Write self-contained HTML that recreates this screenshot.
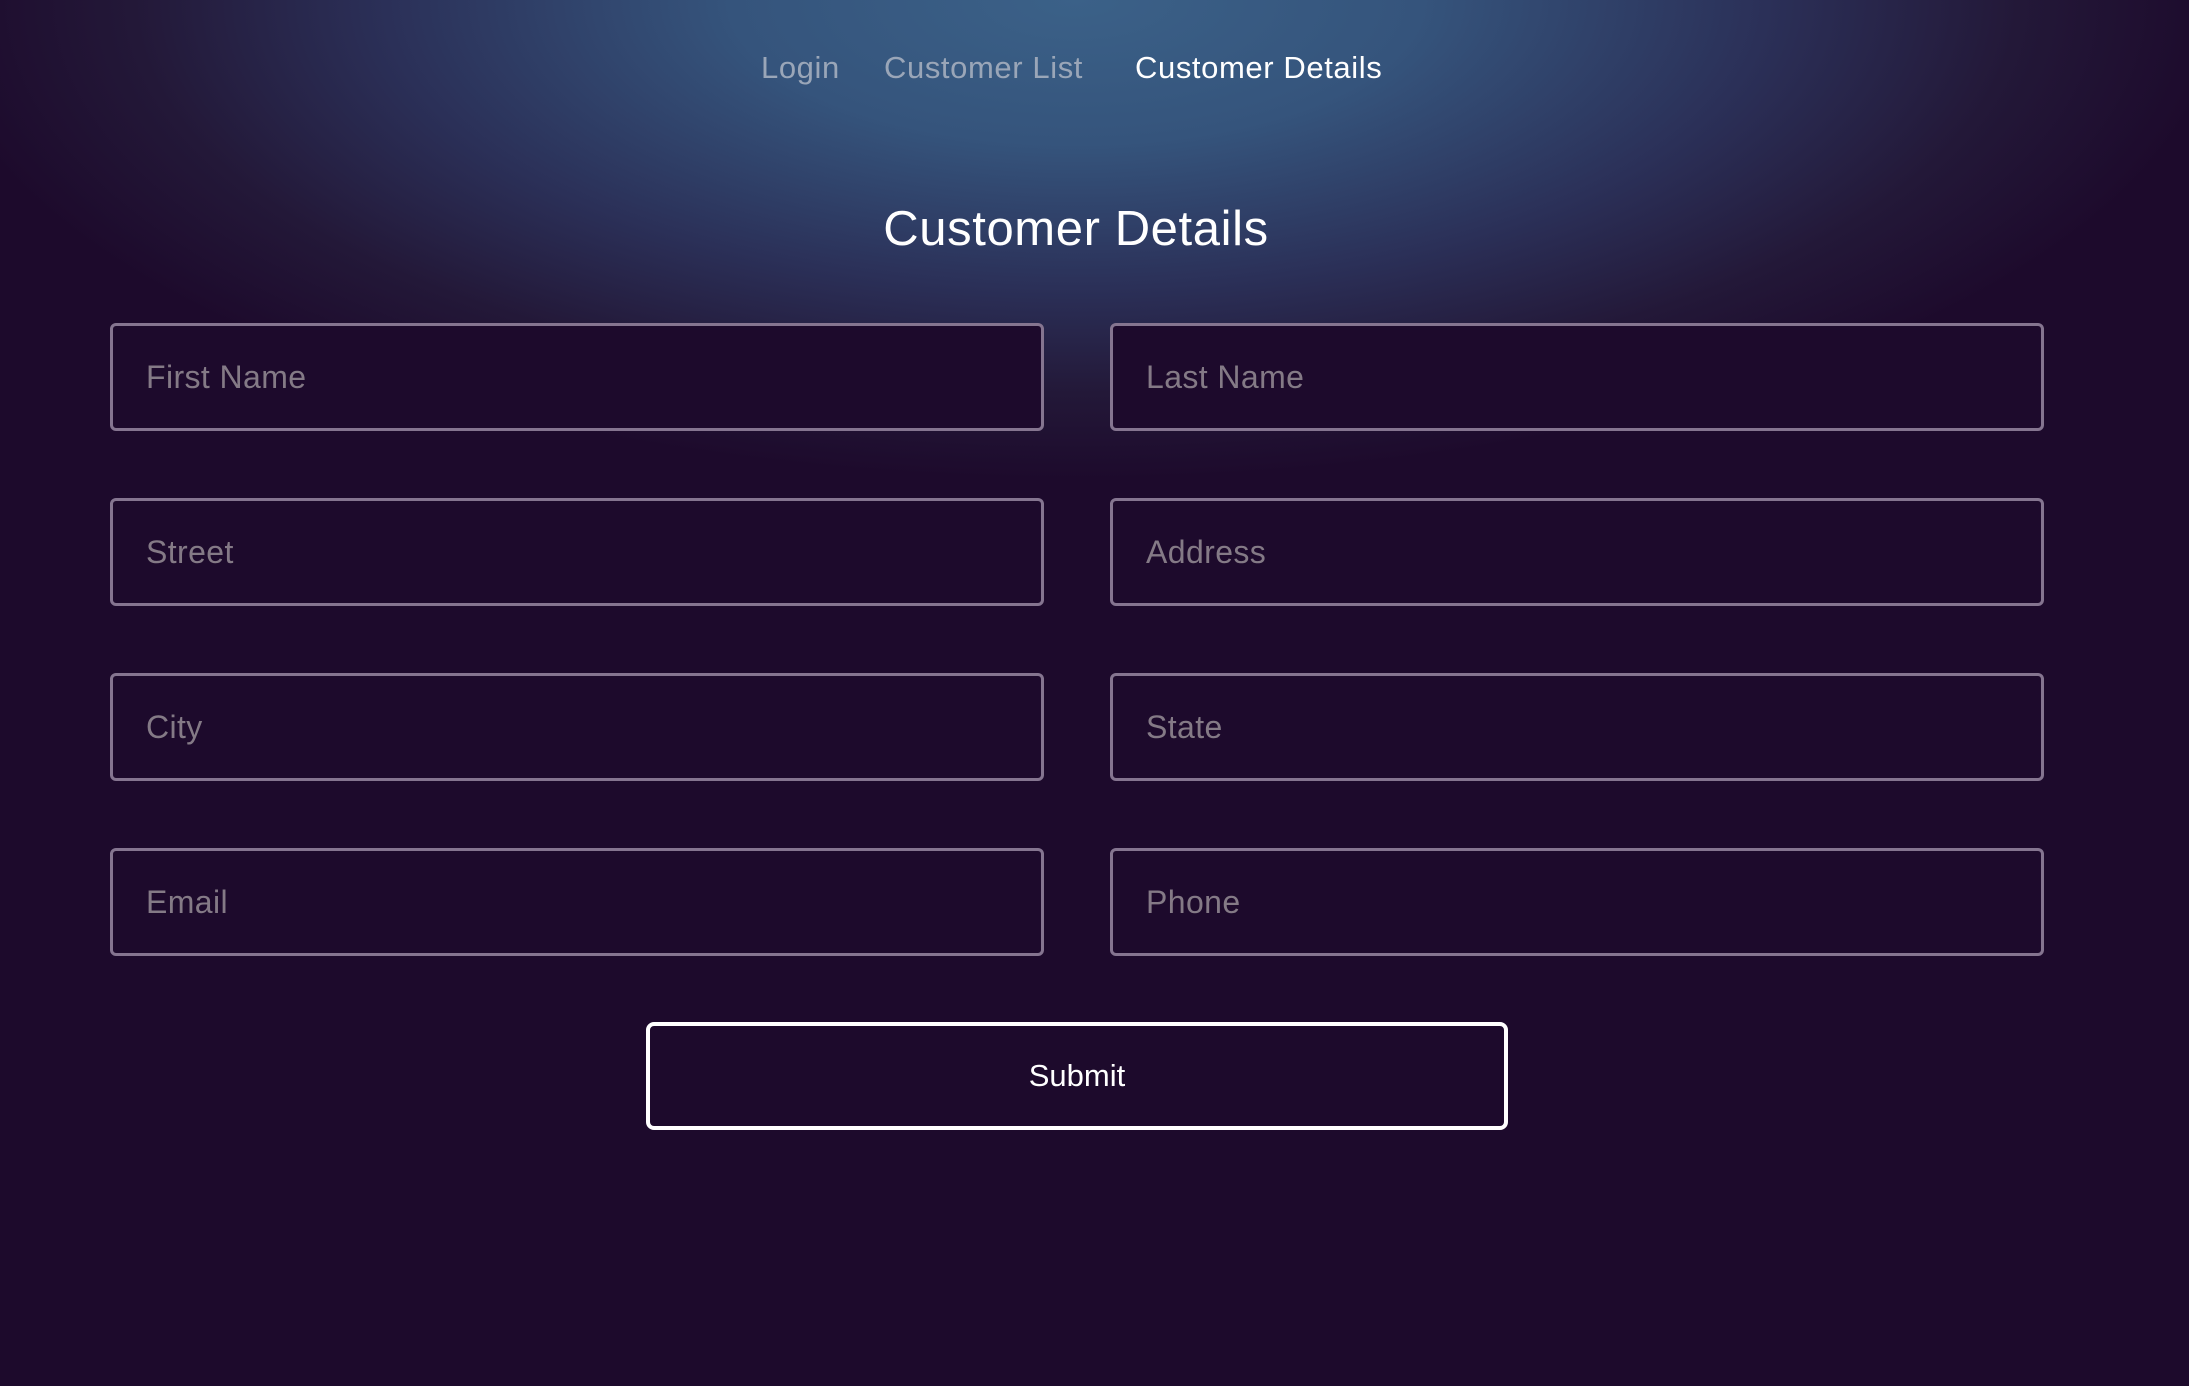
<!DOCTYPE html>
<html><head><meta charset="utf-8"><style>
html,body{margin:0;padding:0;}
body{width:2189px;height:1386px;overflow:hidden;position:relative;background:#1d0a2c;font-family:"Liberation Sans",sans-serif;}
.glow{position:absolute;left:0;top:0;width:2189px;height:1386px;background:radial-gradient(ellipse 1150px 480px at 1076px 0px,#3b6188 0%,#35547c 30%,#2b3058 60%,#231838 82%,rgba(29,10,44,0) 100%);}
.nav{position:absolute;top:50px;font-size:31px;color:#9aa6b8;letter-spacing:0.6px;}
h1{position:absolute;left:0;width:2152px;text-align:center;top:201px;margin:0;font-weight:normal;font-size:49px;color:#fff;letter-spacing:0.6px;}
.in{position:absolute;border:3px solid #857590;border-radius:6px;background:#1d0a2c;color:#847a86;font-size:32px;letter-spacing:0.4px;line-height:102px;padding-left:33px;box-sizing:border-box;height:108px;width:934px;}
.btn{position:absolute;left:646px;top:1022px;width:862px;height:108px;box-sizing:border-box;border:4px solid #fff;border-radius:8px;color:#fff;font-size:31px;text-align:center;line-height:100px;}
</style></head><body>
<div class="glow"></div>
<div class="nav" style="left:761px">Login</div>
<div class="nav" style="left:884px">Customer List</div>
<div class="nav" style="left:1135px;color:#fff">Customer Details</div>
<h1>Customer Details</h1>
<div class="in" style="left:110px;top:323px">First Name</div>
<div class="in" style="left:1110px;top:323px">Last Name</div>
<div class="in" style="left:110px;top:498px">Street</div>
<div class="in" style="left:1110px;top:498px">Address</div>
<div class="in" style="left:110px;top:673px">City</div>
<div class="in" style="left:1110px;top:673px">State</div>
<div class="in" style="left:110px;top:848px">Email</div>
<div class="in" style="left:1110px;top:848px">Phone</div>
<div class="btn">Submit</div>
</body></html>
